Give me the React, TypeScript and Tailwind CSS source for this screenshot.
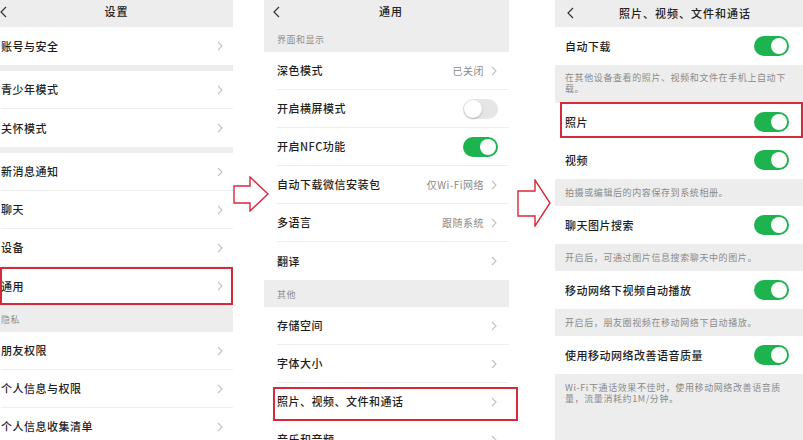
import { ReactNode } from "react";

function Chevron() {
  return (
    <svg width="6" height="10" viewBox="0 0 6 10" className="shrink-0">
      <polyline points="1,1 5,5 1,9" fill="none" stroke="#c2c2c2" strokeWidth="1.1" />
    </svg>
  );
}

function BackChevron() {
  return (
    <svg width="7" height="12" viewBox="0 0 7 12">
      <polyline points="6,1 1,6 6,11" fill="none" stroke="#333" strokeWidth="1.2" />
    </svg>
  );
}

function Toggle({ on }: { on: boolean }) {
  return on ? (
    <div className="flex h-[20px] w-[35px] items-center justify-end rounded-full bg-[#1db34f] pr-[2px]">
      <div className="h-[16px] w-[16px] rounded-full bg-white" />
    </div>
  ) : (
    <div className="flex h-[20px] w-[35px] items-center rounded-full bg-[#e6e6e6] pl-[1px]">
      <div className="h-[18px] w-[18px] rounded-full bg-white shadow-[0_1px_2px_rgba(0,0,0,0.25)]" />
    </div>
  );
}

function NavBar({ title, pl, pb = "pb-[4px]" }: { title: string; pl: string; pb?: string }) {
  return (
    <div className={`grid h-[27px] grid-cols-[1fr_auto_1fr] items-center bg-[#ededed] ${pl} ${pb}`}>
      <BackChevron />
      <span className="text-[11px] font-medium tracking-[1px] text-[#222]">{title}</span>
      <span />
    </div>
  );
}

function Row({
  label,
  right,
  pl,
  pr,
  line = true,
  h = "h-[38px]",
  red,
}: {
  label: string;
  right?: ReactNode;
  pl: string;
  pr: string;
  line?: boolean;
  h?: string;
  red?: string;
}) {
  return (
    <div className={`relative bg-white ${pl} ${h}`}>
      <div className={`flex h-full items-center justify-between ${pr} ${line ? "border-b border-[#eeeeee]" : ""}`}>
        <span className="text-[11px] font-medium tracking-[0.5px] text-[#1e1e1e]">{label}</span>
        {right ?? <Chevron />}
      </div>
      {red && <div className={`absolute border-2 border-[#d42a3a] ${red}`} />}
    </div>
  );
}

function Value({ text }: { text: string }) {
  return (
    <div className="flex items-center gap-[7px]">
      <span className="text-[10px] tracking-[0.5px] text-[#8a8a8a]">{text}</span>
      <Chevron />
    </div>
  );
}

function Section({ label, pl, h = "h-[27px]" }: { label: string; pl: string; h?: string }) {
  return (
    <div className={`flex items-end bg-[#ededed] pb-[6px] ${pl} ${h}`}>
      <span className="text-[9px] tracking-[0.5px] text-[#8f8f8f]">{label}</span>
    </div>
  );
}

function Desc({ text, h, pt }: { text: string; h: string; pt?: string }) {
  return (
    <div className={`bg-[#ededed] pl-[10px] pr-[14px] ${h} ${pt ?? "flex items-center"}`}>
      <p className="text-[9px] leading-[11px] tracking-[0.6px] text-[#8a8a8a]">{text}</p>
    </div>
  );
}

function Arrow({ w, h, shaftTop, shaftBottom, neck }: { w: number; h: number; shaftTop: number; shaftBottom: number; neck: number }) {
  const mid = h / 2;
  const pts = `1,${shaftTop} ${neck},${shaftTop} ${neck},1 ${w - 1},${mid} ${neck},${h - 1} ${neck},${shaftBottom} 1,${shaftBottom}`;
  return (
    <svg width={w} height={h} viewBox={`0 0 ${w} ${h}`}>
      <polygon points={pts} fill="white" stroke="#d8283a" strokeWidth="1.4" strokeLinejoin="miter" />
    </svg>
  );
}

export default function App() {
  return (
    <div className="flex h-[440px] w-[803px] overflow-hidden bg-white font-['Noto_Sans_CJK_SC','Noto_Sans',sans-serif]">
      {/* 设置 */}
      <div className="w-[233px] shrink-0">
        <NavBar title="设置" pl="pl-0" />
        <Row label="账号与安全" pl="pl-[1px]" pr="pr-[10px]" line={false} />
        <div className="h-[6px] bg-[#ededed]" />
        <Row label="青少年模式" pl="pl-[1px]" pr="pr-[10px]" />
        <Row label="关怀模式" pl="pl-[1px]" pr="pr-[10px]" line={false} />
        <div className="h-[6px] bg-[#ededed]" />
        <Row label="新消息通知" pl="pl-[1px]" pr="pr-[10px]" />
        <Row label="聊天" pl="pl-[1px]" pr="pr-[10px]" />
        <Row label="设备" pl="pl-[1px]" pr="pr-[10px]" />
        <Row label="通用" pl="pl-[1px]" pr="pr-[10px]" line={false} red="inset-0" />
        <Section label="隐私" pl="pl-[1px]" />
        <Row label="朋友权限" pl="pl-[1px]" pr="pr-[10px]" />
        <Row label="个人信息与权限" pl="pl-[1px]" pr="pr-[10px]" />
        <Row label="个人信息收集清单" pl="pl-[1px]" pr="pr-[10px]" />
      </div>

      <div className="relative z-10 w-[31px] shrink-0">
        <div className="absolute left-0 top-[176px]">
          <Arrow w={36} h={36} shaftTop={10} shaftBottom={27} neck={17} />
        </div>
      </div>

      {/* 通用 */}
      <div className="w-[245px] shrink-0">
        <NavBar title="通用" pl="pl-[9px]" />
        <Section label="界面和显示" pl="pl-[13px]" h="h-[25px]" />
        <Row label="深色模式" pl="pl-[13px]" pr="pr-[12px]" right={<Value text="已关闭" />} />
        <Row label="开启横屏模式" pl="pl-[13px]" pr="pr-[11px]" right={<Toggle on={false} />} />
        <Row label="开启NFC功能" pl="pl-[13px]" pr="pr-[11px]" right={<Toggle on />} />
        <Row label="自动下载微信安装包" pl="pl-[13px]" pr="pr-[12px]" right={<Value text="仅Wi-Fi网络" />} />
        <Row label="多语言" pl="pl-[13px]" pr="pr-[12px]" right={<Value text="跟随系统" />} />
        <Row label="翻译" pl="pl-[13px]" pr="pr-[12px]" line={false} />
        <Section label="其他" pl="pl-[13px]" />
        <Row label="存储空间" pl="pl-[13px]" pr="pr-[12px]" />
        <Row label="字体大小" pl="pl-[13px]" pr="pr-[12px]" />
        <Row
          label="照片、视频、文件和通话"
          pl="pl-[13px]"
          pr="pr-[12px]"
          red="left-[9px] -right-[9px] top-[4px] bottom-0"
        />
        <Row label="音乐和音频" pl="pl-[13px]" pr="pr-[12px]" />
      </div>

      <div className="relative z-10 w-[46px] shrink-0">
        <div className="absolute left-[8px] top-[179px]">
          <Arrow w={34} h={48} shaftTop={12} shaftBottom={37} neck={18} />
        </div>
      </div>

      {/* 照片、视频、文件和通话 */}
      <div className="w-[248px] shrink-0">
        <NavBar title="照片、视频、文件和通话" pl="pl-[12px]" pb="pb-[1px]" />
        <Row label="自动下载" pl="pl-[10px]" pr="pr-[14px]" line={false} right={<Toggle on />} />
        <Desc text="在其他设备查看的照片、视频和文件在手机上自动下载。" h="h-[38px]" pt="pt-[7px]" />
        <Row
          label="照片"
          pl="pl-[10px]"
          pr="pr-[14px]"
          right={<Toggle on />}
          red="left-[5px] right-0 -top-[1px] bottom-[3px]"
          line={false}
        />
        <Row label="视频" pl="pl-[10px]" pr="pr-[14px]" line={false} right={<Toggle on />} />
        <Desc text="拍摄或编辑后的内容保存到系统相册。" h="h-[27px]" />
        <Row label="聊天图片搜索" pl="pl-[10px]" pr="pr-[14px]" line={false} right={<Toggle on />} />
        <Desc text="开启后，可通过图片信息搜索聊天中的图片。" h="h-[27px]" />
        <Row label="移动网络下视频自动播放" pl="pl-[10px]" pr="pr-[14px]" line={false} right={<Toggle on />} />
        <Desc text="开启后，朋友圈视频在移动网络下自动播放。" h="h-[27px]" />
        <Row label="使用移动网络改善语音质量" pl="pl-[10px]" pr="pr-[14px]" line={false} right={<Toggle on />} />
        <Desc text="Wi-Fi下通话效果不佳时，使用移动网络改善语音质量，流量消耗约1M/分钟。" h="h-[70px]" pt="pt-[8px]" />
      </div>
    </div>
  );
}
